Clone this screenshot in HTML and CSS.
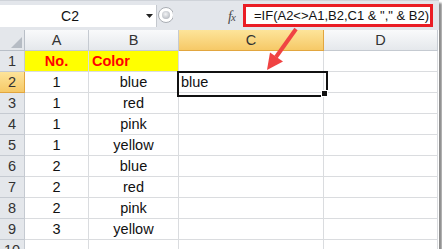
FILE: index.html
```html
<!DOCTYPE html>
<html lang="en">

<head>
    <meta charset="UTF-8">
    <title>IF formula</title>
    <link rel="stylesheet" href="styles.css">
</head>

<body>
    <div class="window">
        <!-- formula bar -->
        <div class="toolbar">
            <div class="namebox">
                <span class="cellref">C2</span>
                <svg class="dropdown" width="7" height="4" viewBox="0 0 7 4"><path d="M0 0h7L3.5 4z" fill="#222"/></svg>
            </div>
            <div class="splitter">
                <svg width="16" height="18" viewBox="0 0 16 18">
                    <defs>
                        <radialGradient id="knob" cx="0.45" cy="0.4" r="0.6">
                            <stop offset="0" stop-color="#f4f5f7"/>
                            <stop offset="1" stop-color="#b9bdc3"/>
                        </radialGradient>
                    </defs>
                    <circle cx="9" cy="9" r="7.5" fill="#fff" stroke="#a9adb3"/>
                    <circle cx="9" cy="9" r="4" fill="url(#knob)"/>
                </svg>
            </div>
            <div class="fx"><i>f</i><i class="x">x</i></div>
            <div class="formula">=IF(A2&lt;&gt;A1,B2,C1 &amp; "," &amp; B2)</div>
        </div>

        <!-- worksheet -->
        <div class="sheet">
            <div class="corner"><span class="tri"></span></div>
            <div class="colhead">A</div>
            <div class="colhead">B</div>
            <div class="colhead on">C</div>
            <div class="colhead">D</div>

            <div class="rowhead">1</div>
            <div class="cell yellow center">No.</div>
            <div class="cell yellow">Color</div>
            <div class="cell"></div>
            <div class="cell"></div>

            <div class="rowhead on">2</div>
            <div class="cell center">1</div>
            <div class="cell center">blue</div>
            <div class="cell active">blue</div>
            <div class="cell"></div>

            <div class="rowhead">3</div>
            <div class="cell center">1</div>
            <div class="cell center">red</div>
            <div class="cell"></div>
            <div class="cell"></div>

            <div class="rowhead">4</div>
            <div class="cell center">1</div>
            <div class="cell center">pink</div>
            <div class="cell"></div>
            <div class="cell"></div>

            <div class="rowhead">5</div>
            <div class="cell center">1</div>
            <div class="cell center">yellow</div>
            <div class="cell"></div>
            <div class="cell"></div>

            <div class="rowhead">6</div>
            <div class="cell center">2</div>
            <div class="cell center">blue</div>
            <div class="cell"></div>
            <div class="cell"></div>

            <div class="rowhead">7</div>
            <div class="cell center">2</div>
            <div class="cell center">red</div>
            <div class="cell"></div>
            <div class="cell"></div>

            <div class="rowhead">8</div>
            <div class="cell center">2</div>
            <div class="cell center">pink</div>
            <div class="cell"></div>
            <div class="cell"></div>

            <div class="rowhead">9</div>
            <div class="cell center">3</div>
            <div class="cell center">yellow</div>
            <div class="cell"></div>
            <div class="cell"></div>

            <div class="rowhead">10</div>
            <div class="cell"></div>
            <div class="cell"></div>
            <div class="cell"></div>
            <div class="cell"></div>
        </div>

        <!-- callout arrow -->
        <svg class="arrow" width="442" height="252" viewBox="0 0 442 252">
            <path d="M296 29 L276 57" stroke="#f04343" stroke-width="4" fill="none"/>
            <path d="M267 70 L270 52.5 L283 61.5 Z" fill="#f04343"/>
        </svg>
    </div>
</body>

</html>
```

FILE: styles.css
```css
* {
    margin: 0;
    padding: 0;
    box-sizing: border-box;
}

body {
    background: #fff;
    font-family: "Liberation Sans", Arial, sans-serif;
}

/* window with its shadow */
.window {
    width: 439px;
    height: 249px;
    background: #fff;
    position: relative;
    overflow: hidden;
    box-shadow: 3px 3px 2px #8c8c8c;
}

/* formula bar */
.toolbar {
    height: 30px;
    display: flex;
    align-items: flex-start;
    background: #e3e6eb;
    border-top: 1px solid #cfd3d9;
    padding-top: 3px;
}

.namebox {
    width: 157px;
    height: 22px;
    margin-top: 1px;
    background: #fff;
    display: flex;
    align-items: center;
    border-right: 1px solid #c4c8ce;
}

.cellref {
    width: 140px;
    text-align: center;
    font-size: 14px;
    color: #111;
}

.dropdown {
    margin-left: 6px;
}

.splitter {
    width: 18px;
    height: 22px;
    display: flex;
    align-items: center;
}

.fx {
    width: 68px;
    padding-left: 53px;
    padding-top: 5px;
    font-family: "Liberation Serif", "Times New Roman", serif;
    font-size: 14px;
    color: #4a4a4a;
    letter-spacing: -1px;
}

.fx .x {
    font-size: 11px;
}

.formula {
    width: 190px;
    height: 23px;
    border: 3px solid #ea1d25;
    background: #fff;
    padding-left: 8px;
    font-size: 13px;
    line-height: 17px;
    color: #111;
    white-space: nowrap;
}

/* grid */
.sheet {
    display: grid;
    grid-template-columns: 25px 64px 90px 145px 114px;
    grid-auto-rows: 21px;
    font-size: 14.5px;
    color: #111;
}

.corner,
.colhead,
.rowhead,
.cell {
    border-right: 1px solid #dadcdf;
    border-bottom: 1px solid #dadcdf;
}

.corner {
    background: #e4e7eb;
    border-color: #b9bfc7;
    position: relative;
}

.tri {
    position: absolute;
    right: 2px;
    bottom: 2px;
    width: 0;
    height: 0;
    border-left: 11px solid transparent;
    border-bottom: 11px solid #b6bcc4;
}

.colhead {
    background: linear-gradient(#f9fafb, #e5e8ec);
    border-color: #c5cad1;
    text-align: center;
    line-height: 20px;
    color: #333;
}

.rowhead {
    background: #e4e7eb;
    border-color: #c5cad1;
    text-align: center;
    line-height: 20px;
    color: #333;
}

.colhead.on,
.rowhead.on {
    background: linear-gradient(#fde49a, #f6c967);
    border-color: #e2a63f;
}

.cell {
    line-height: 20px;
    padding-left: 3px;
    white-space: nowrap;
}

.center {
    text-align: center;
    padding-left: 0;
}

.yellow {
    background: #ffff00;
    color: #ff0000;
    font-weight: bold;
}

/* selected cell */
.active {
    position: relative;
    padding-left: 2px;
}

.active::before {
    content: "";
    position: absolute;
    left: -2px;
    top: -1px;
    width: 147px;
    height: 22px;
    border: 2px solid #111;
    z-index: 2;
}

.active::after {
    content: "";
    position: absolute;
    left: 142px;
    top: 18px;
    width: 5px;
    height: 5px;
    background: #111;
    border: 1px solid #fff;
    z-index: 3;
}

.arrow {
    position: absolute;
    left: 0;
    top: 0;
    pointer-events: none;
}
```
